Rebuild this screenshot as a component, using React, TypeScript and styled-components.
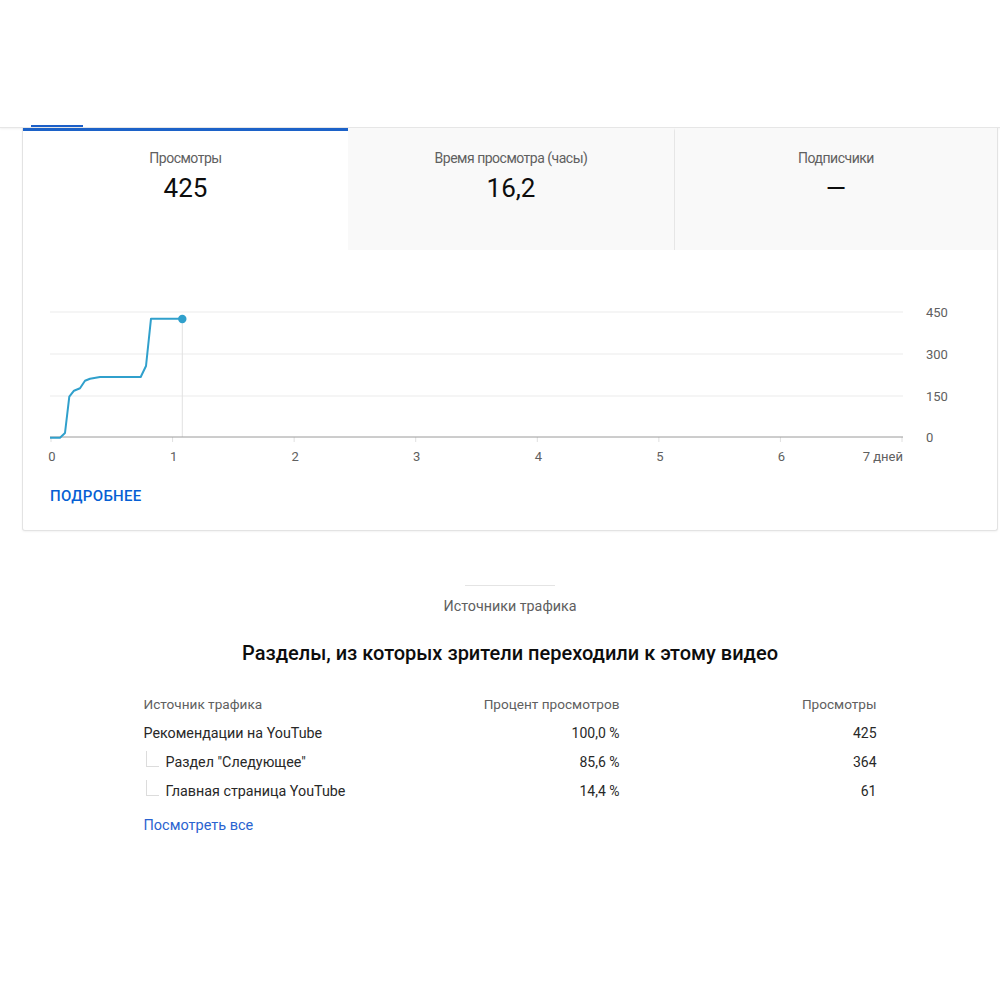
import * as React from "react";
import styled, { createGlobalStyle } from "styled-components";

const GlobalStyle = createGlobalStyle`
  html, body {
    margin: 0;
    padding: 0;
    background: #fff;
  }
  body {
    font-family: Roboto, "Noto Sans", "Liberation Sans", sans-serif;
    color: #0d0d0d;
  }
`;

const accent = "#065fd4";
const muted = "#606060";
const lineColor = "#30a0cc";

const TopBar = styled.header`
  height: 127px;
  display: flex;
  flex-direction: column;
  justify-content: flex-end;
  padding-left: 31px;
  border-bottom: 1px solid #e6e6e6;
  box-shadow: 0 1px 2px rgba(0, 0, 0, 0.06);
`;

const TabIndicator = styled.div`
  width: 52px;
  height: 2px;
  background: #1c5fc8;
`;

const Main = styled.main`
  width: 976px;
  margin-left: 22px;
`;

const Card = styled.section`
  border: 1px solid #e3e3e3;
  border-top: none;
  border-radius: 0 0 3px 3px;
  box-shadow: 0 1px 2px rgba(0, 0, 0, 0.05);
  background: #fff;
`;

const Tabs = styled.div`
  display: grid;
  grid-template-columns: 325px 326px 1fr;
`;

const Tab = styled.div<{ $active?: boolean; $divider?: boolean }>`
  box-sizing: border-box;
  height: 122px;
  border-top: 3px solid ${(p) => (p.$active ? "#1c62c8" : "transparent")};
  background: ${(p) => (p.$active ? "#fff" : "#f9f9f9")};
  border-left: ${(p) => (p.$divider ? "1px solid #e6e6e6" : "none")};
  display: flex;
  flex-direction: column;
  align-items: center;
  padding-top: 17px;
`;

const TabLabel = styled.div`
  font-size: 14px;
  line-height: 20px;
  letter-spacing: -0.5px;
  color: ${muted};
`;

const TabValue = styled.div`
  margin-top: 4px;
  font-size: 26px;
  line-height: 32px;
  color: #0d0d0d;
`;

const ChartWrap = styled.div`
  height: 220px;
  svg {
    display: block;
  }
  text {
    font-family: Roboto, "Noto Sans", sans-serif;
    font-size: 13px;
    fill: ${muted};
  }
`;

const MoreLink = styled.a`
  display: block;
  margin: 16px 0 0 27px;
  padding-bottom: 24px;
  font-size: 15px;
  line-height: 20px;
  font-weight: 500;
  letter-spacing: 0.3px;
  color: ${accent};
  text-decoration: none;
`;

const Traffic = styled.section`
  display: flex;
  flex-direction: column;
  align-items: center;
  padding-top: 54px;
`;

const Rule = styled.div`
  width: 90px;
  height: 1px;
  background: #e4e4e4;
`;

const SectionName = styled.div`
  margin-top: 11px;
  font-size: 14.3px;
  line-height: 18px;
  color: ${muted};
`;

const Heading = styled.h2`
  margin: 25px 0 0;
  font-size: 20px;
  line-height: 26px;
  font-weight: 500;
  color: #0d0d0d;
`;

const Table = styled.div`
  margin-top: 23px;
  width: 733px;
  display: grid;
  grid-template-columns: 276px 200px 257px;
  grid-auto-rows: 29px;
  font-size: 14.3px;
  color: #282828;
`;

const Cell = styled.div<{ $num?: boolean; $head?: boolean }>`
  display: flex;
  align-items: center;
  justify-content: ${(p) => (p.$num ? "flex-end" : "flex-start")};
  color: ${(p) => (p.$head ? muted : "#282828")};
  font-size: ${(p) => (p.$head ? "13.6px" : p.$num ? "14px" : "14.3px")};
  height: ${(p) => (p.$head ? "30px" : "29px")};
`;

const Connector = styled.span`
  align-self: flex-start;
  width: 13px;
  height: 16px;
  margin: 4px 7px 0 2px;
  border-left: 1px solid #dcdcdc;
  border-bottom: 1px solid #dcdcdc;
  box-sizing: border-box;
`;

const SeeAll = styled.a`
  margin-top: 12px;
  width: 733px;
  font-size: 14.5px;
  line-height: 18px;
  color: #2a63d0;
  text-decoration: none;
`;

const tabs = [
  { label: "Просмотры", value: "425", active: true },
  { label: "Время просмотра (часы)", value: "16,2" },
  { label: "Подписчики", value: "—" },
];

const rows = [
  { name: "Рекомендации на YouTube", share: "100,0 %", views: "425", sub: false },
  { name: 'Раздел "Следующее"', share: "85,6 %", views: "364", sub: true },
  { name: "Главная страница YouTube", share: "14,4 %", views: "61", sub: true },
];

// chart geometry, in svg units
const plotLeft = 28;
const plotRight = 879;
const baseY = 187;
const dayW = (plotRight - plotLeft) / 7;
const yTicks = [
  { v: "450", y: 62 },
  { v: "300", y: 104 },
  { v: "150", y: 146 },
  { v: "0", y: baseY },
];

const viewsPath =
  "M27 187.7 L37 187.7 L42 183 L46.3 146.7 L51 140.7 L57 138.3 L62 130.7 L67 128.7 L77 127 L117.7 127 L123 116 L128 68.7 L159.3 68.7";

function ViewsChart() {
  return (
    <ChartWrap>
      <svg width="974" height="220" viewBox="0 0 974 220">
        {yTicks.slice(0, 3).map((t) => (
          <line key={t.v} x1={27} x2={880} y1={t.y} y2={t.y} stroke="#ebebeb" strokeWidth={1} />
        ))}
        {yTicks.map((t) => (
          <text key={t.v} x={903} y={t.y + 4.5}>
            {t.v}
          </text>
        ))}
        <line x1={159.3} x2={159.3} y1={69} y2={baseY} stroke="#e2e2e2" strokeWidth={1} />
        {Array.from({ length: 8 }, (_, i) => (
          <line
            key={i}
            x1={plotLeft + i * dayW}
            x2={plotLeft + i * dayW}
            y1={baseY}
            y2={baseY + 5}
            stroke="#e0e0e0"
            strokeWidth={1}
          />
        ))}
        <line x1={27} x2={880} y1={baseY} y2={baseY} stroke="#9a9a9a" strokeWidth={1} />
        {Array.from({ length: 7 }, (_, i) => (
          <text key={i} x={plotLeft + 1 + i * dayW} y={210.5} textAnchor="middle">
            {i}
          </text>
        ))}
        <text x={880} y={210.5} textAnchor="end">
          7 дней
        </text>
        <path d={viewsPath} fill="none" stroke={lineColor} strokeWidth={2} strokeLinejoin="round" />
        <circle cx={159.3} cy={69} r={4.2} fill={lineColor} />
      </svg>
    </ChartWrap>
  );
}

export default function App() {
  return (
    <>
      <GlobalStyle />
      <TopBar>
        <TabIndicator />
      </TopBar>
      <Main>
        <Card>
          <Tabs>
            {tabs.map((t, i) => (
              <Tab key={t.label} $active={t.active} $divider={i === 2}>
                <TabLabel>{t.label}</TabLabel>
                <TabValue>{t.value}</TabValue>
              </Tab>
            ))}
          </Tabs>
          <ViewsChart />
          <MoreLink href="#">ПОДРОБНЕЕ</MoreLink>
        </Card>

        <Traffic>
          <Rule />
          <SectionName>Источники трафика</SectionName>
          <Heading>Разделы, из которых зрители переходили к этому видео</Heading>
          <Table>
            <Cell $head>Источник трафика</Cell>
            <Cell $head $num>Процент просмотров</Cell>
            <Cell $head $num>Просмотры</Cell>
            {rows.map((r) => (
              <React.Fragment key={r.name}>
                <Cell>
                  {r.sub && <Connector />}
                  {r.name}
                </Cell>
                <Cell $num>{r.share}</Cell>
                <Cell $num>{r.views}</Cell>
              </React.Fragment>
            ))}
          </Table>
          <SeeAll href="#">Посмотреть все</SeeAll>
        </Traffic>
      </Main>
    </>
  );
}
